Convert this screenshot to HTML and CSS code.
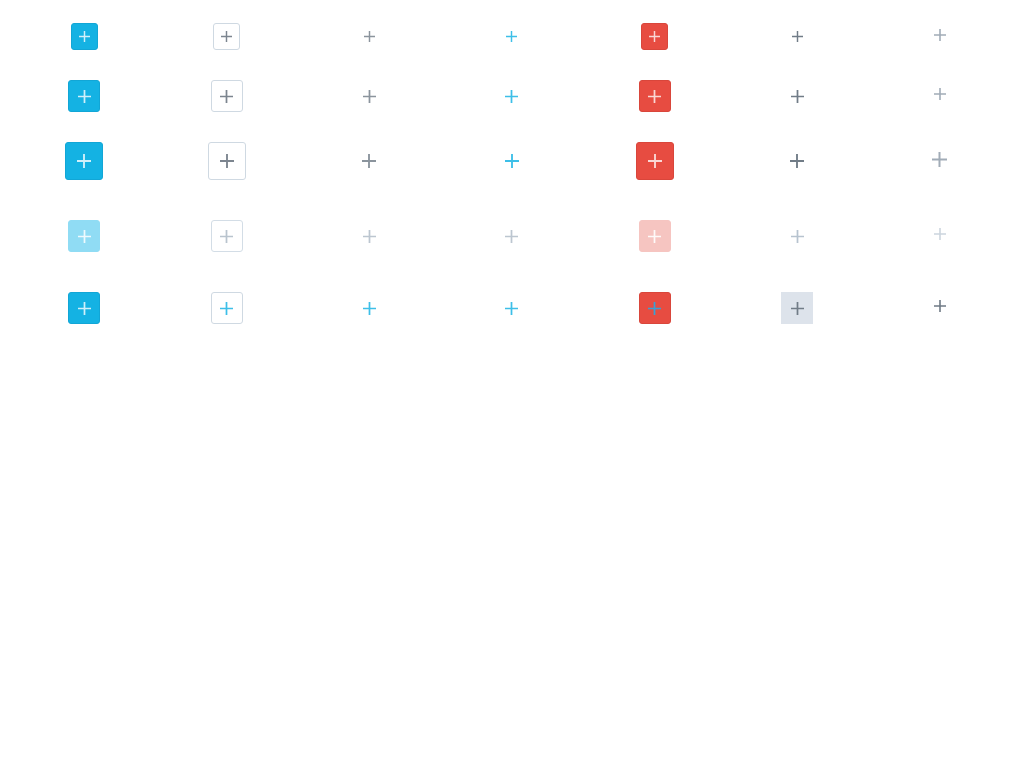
FILE: index.html
```html
<!DOCTYPE html>
<html lang="en">
<head>
<meta charset="utf-8">
<title>Icon buttons</title>
<link rel="stylesheet" href="styles.css">
</head>
<body>
<svg width="0" height="0" class="defs" aria-hidden="true">
  <symbol id="plus" viewBox="0 0 12 12"><path d="M6 0v12M0 6h12"/></symbol>
</svg>
<main class="board">
  <div class="row sm">
    <button class="btn primary"><svg class="ic"><use href="#plus"/></svg></button>
    <button class="btn outline"><svg class="ic"><use href="#plus"/></svg></button>
    <button class="btn ghost"><svg class="ic"><use href="#plus"/></svg></button>
    <button class="btn link"><svg class="ic"><use href="#plus"/></svg></button>
    <button class="btn danger"><svg class="ic"><use href="#plus"/></svg></button>
    <button class="btn muted"><svg class="ic"><use href="#plus"/></svg></button>
    <button class="btn plain"><svg class="ic"><use href="#plus"/></svg></button>
  </div>
  <div class="row md">
    <button class="btn primary"><svg class="ic"><use href="#plus"/></svg></button>
    <button class="btn outline"><svg class="ic"><use href="#plus"/></svg></button>
    <button class="btn ghost"><svg class="ic"><use href="#plus"/></svg></button>
    <button class="btn link"><svg class="ic"><use href="#plus"/></svg></button>
    <button class="btn danger"><svg class="ic"><use href="#plus"/></svg></button>
    <button class="btn muted"><svg class="ic"><use href="#plus"/></svg></button>
    <button class="btn plain"><svg class="ic"><use href="#plus"/></svg></button>
  </div>
  <div class="row lg">
    <button class="btn primary"><svg class="ic"><use href="#plus"/></svg></button>
    <button class="btn outline"><svg class="ic"><use href="#plus"/></svg></button>
    <button class="btn ghost"><svg class="ic"><use href="#plus"/></svg></button>
    <button class="btn link"><svg class="ic"><use href="#plus"/></svg></button>
    <button class="btn danger"><svg class="ic"><use href="#plus"/></svg></button>
    <button class="btn muted"><svg class="ic"><use href="#plus"/></svg></button>
    <button class="btn plain"><svg class="ic"><use href="#plus"/></svg></button>
  </div>
  <div class="row md disabled">
    <button class="btn primary" disabled><svg class="ic"><use href="#plus"/></svg></button>
    <button class="btn outline" disabled><svg class="ic"><use href="#plus"/></svg></button>
    <button class="btn ghost" disabled><svg class="ic"><use href="#plus"/></svg></button>
    <button class="btn link" disabled><svg class="ic"><use href="#plus"/></svg></button>
    <button class="btn danger" disabled><svg class="ic"><use href="#plus"/></svg></button>
    <button class="btn muted" disabled><svg class="ic"><use href="#plus"/></svg></button>
    <button class="btn plain" disabled><svg class="ic"><use href="#plus"/></svg></button>
  </div>
  <div class="row md active">
    <button class="btn primary"><svg class="ic"><use href="#plus"/></svg></button>
    <button class="btn outline"><svg class="ic"><use href="#plus"/></svg></button>
    <button class="btn ghost"><svg class="ic"><use href="#plus"/></svg></button>
    <button class="btn link"><svg class="ic"><use href="#plus"/></svg></button>
    <button class="btn danger"><svg class="ic"><use href="#plus"/></svg></button>
    <button class="btn muted"><svg class="ic"><use href="#plus"/></svg></button>
    <button class="btn plain"><svg class="ic"><use href="#plus"/></svg></button>
  </div>
</main>
</body>
</html>
```
FILE: styles.css
```css
* { box-sizing: border-box; }
body {
  margin: 0;
  background: #ffffff;
  font-family: "Liberation Sans", Arial, sans-serif;
}
.defs { position: absolute; }
.board {
  padding: 0 13px;
  display: flex;
  flex-direction: column;
}
.row {
  display: grid;
  grid-template-columns: repeat(7, 1fr);
  justify-items: center;
  align-items: center;
}
.row.sm { margin-top: 23px; }
.row.md { margin-top: 30px; }
.row.lg { margin-top: 30px; }
.row.disabled, .row.active { margin-top: 40px; }

.btn {
  display: flex;
  align-items: center;
  justify-content: center;
  padding: 0;
  margin: 0;
  border: 1px solid transparent;
  border-radius: 3px;
  background: transparent;
  width: 32px;
  height: 32px;
  cursor: pointer;
}
.row.sm .btn { width: 27px; height: 27px; }
.row.lg .btn { width: 38px; height: 38px; }

.ic {
  width: 12px;
  height: 12px;
  fill: none;
  stroke: currentColor;
  stroke-width: 1.6;
}
.ic path { vector-effect: non-scaling-stroke; }
.row.sm .ic { width: 11px; height: 11px; }
.row.md .ic { width: 13px; height: 13px; }
.row.lg .ic { width: 14px; height: 14px; }

.primary { background: #14b2e3; border-color: #12a6d6; color: rgba(255,255,255,0.8); }
.outline { background: #fff; border-color: #cfd9e2; color: #7c858f; }
.ghost { color: #8b949d; }
.link { color: #3dbfe8; }
.danger { background: #e74c41; border-color: #d9463b; color: rgba(255,255,255,0.78); }
.muted { color: #717c87; border-radius: 0; }
.plain { color: #a1acb7; margin-top: -4px; }
.row.sm .plain .ic, .row.md .plain .ic { width: 12px; height: 12px; }
.row.lg .plain .ic { width: 15px; height: 15px; }

.disabled .primary { background: #90dcf4; border-color: #90dcf4; color: rgba(255,255,255,0.85); }
.disabled .outline { border-color: #d3dde6; color: #b9c4ce; }
.disabled .ghost { color: #bcc6d0; }
.disabled .link { color: #bcc6d0; }
.disabled .danger { background: #f6c5c1; border-color: #f6c5c1; color: rgba(255,255,255,0.9); }
.disabled .muted { color: #b7c3cf; }
.disabled .plain { color: #ccd5de; }
.disabled .btn { cursor: default; }

.active .outline { color: #3dbfe8; }
.active .ghost { color: #3dbfe8; }
.active .link { color: #3dbfe8; }
.active .danger { color: #3a9fd4; }
.active .muted { background: #dde3eb; color: #717c87; }
.active .plain { color: #6f7a85; }
```
